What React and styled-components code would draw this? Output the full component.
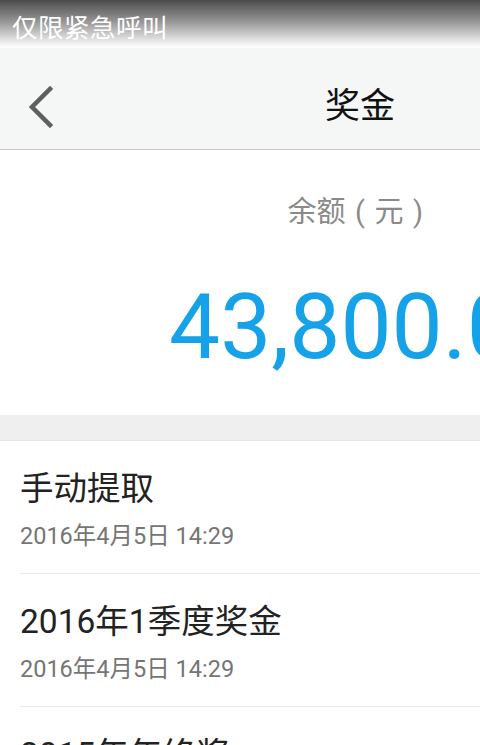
import React from "react";
import styled, { createGlobalStyle } from "styled-components";

const GlobalStyle = createGlobalStyle`
  html, body {
    margin: 0;
    padding: 0;
    overflow: hidden;
    background: #ffffff;
  }
  body {
    font-family: Roboto, "Noto Sans CJK SC", "Noto Sans", sans-serif;
  }
`;

// the phone screen is wider than the window, so the right part is clipped
const Viewport = styled.div`
  width: 480px;
  height: 745px;
  overflow: hidden;
`;

const Screen = styled.div`
  width: 720px;
  display: flex;
  flex-direction: column;
`;

const StatusBar = styled.div`
  height: 48px;
  display: flex;
  align-items: center;
  padding: 2px 0 0 12px;
  box-sizing: border-box;
  background: linear-gradient(#4c4c4c 0%, #969696 45%, #f0f0f0 90%, #ffffff 100%);
  color: #ffffff;
  font-size: 25.5px;
  letter-spacing: 0.5px;
`;

const Header = styled.div`
  position: relative;
  height: 102px;
  display: flex;
  align-items: center;
  justify-content: center;
  background: #f5f6f6;
  border-bottom: 1px solid #c8c8c8;
  box-sizing: border-box;
  padding-top: 8px;
`;

const BackButton = styled.button`
  position: absolute;
  left: 22px;
  top: 37px;
  width: 36px;
  height: 44px;
  padding: 0;
  border: 0;
  background: transparent;
  display: flex;
  align-items: center;
  justify-content: center;
`;

const Title = styled.div`
  font-size: 35px;
  color: #111111;
`;

const Balance = styled.div`
  height: 265px;
  display: flex;
  flex-direction: column;
  align-items: center;
  background: #ffffff;
`;

const BalanceLabel = styled.div`
  margin-top: 42px;
  font-size: 29px;
  color: #8a8a8a;
  line-height: 40px;
  display: flex;
`;

const Paren = styled.span`
  display: inline-block;
  width: 1em;
  text-align: center;
`;

const BalanceAmount = styled.div`
  margin-top: 40px;
  padding-left: 18px;
  font-family: Roboto, sans-serif;
  font-size: 91px;
  line-height: 110px;
  color: #16a2e8;
  white-space: nowrap;
`;

const Gap = styled.div`
  height: 25px;
  background: #efefef;
  border-bottom: 1px solid #e6e6e6;
`;

const List = styled.div`
  padding-left: 20px;
  background: #ffffff;
`;

const Item = styled.div`
  height: 133px;
  box-sizing: border-box;
  display: flex;
  flex-direction: column;
  padding-top: 26px;
  border-bottom: 1px solid #e9e9e9;
`;

const ItemTitle = styled.div`
  font-size: 33.5px;
  line-height: 44px;
  color: #222222;
`;

const ItemDate = styled.div`
  margin-top: 8px;
  font-size: 23.5px;
  line-height: 34px;
  color: #757575;
`;

const records = [
  { title: "手动提取", date: "2016年4月5日 14:29" },
  { title: "2016年1季度奖金", date: "2016年4月5日 14:29" },
  { title: "2015年年终奖", date: "2016年4月5日 14:29" },
];

const ChevronLeft = () => (
  <svg width="30" height="44" viewBox="0 0 30 44">
    <path
      d="M25 4 L7 22 L25 40"
      fill="none"
      stroke="#5f5f5f"
      strokeWidth="4.5"
      strokeLinecap="square"
    />
  </svg>
);

const App = () => (
  <Viewport>
    <GlobalStyle />
    <Screen>
      <StatusBar>仅限紧急呼叫</StatusBar>
      <Header>
        <BackButton aria-label="返回">
          <ChevronLeft />
        </BackButton>
        <Title>奖金</Title>
      </Header>
      <Balance>
        <BalanceLabel>
          余额<Paren>(</Paren>元<Paren>)</Paren>
        </BalanceLabel>
        <BalanceAmount>43,800.00</BalanceAmount>
      </Balance>
      <Gap />
      <List>
        {records.map((r) => (
          <Item key={r.title}>
            <ItemTitle>{r.title}</ItemTitle>
            <ItemDate>{r.date}</ItemDate>
          </Item>
        ))}
      </List>
    </Screen>
  </Viewport>
);

export default App;
